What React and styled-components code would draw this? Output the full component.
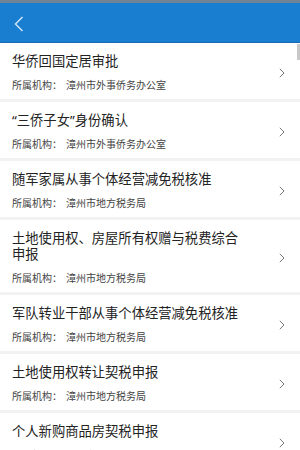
import React from 'react'
import styled, { createGlobalStyle } from 'styled-components'

const GlobalStyle = createGlobalStyle`
  html, body {
    margin: 0;
    padding: 0;
    background: #fff;
  }
  body {
    font-family: "Noto Sans", "Noto Sans CJK SC", sans-serif;
    overflow: hidden;
  }
`

const items = [
  { title: '华侨回国定居审批', org: '漳州市外事侨务办公室' },
  { title: '“三侨子女”身份确认', org: '漳州市外事侨务办公室' },
  { title: '随军家属从事个体经营减免税核准', org: '漳州市地方税务局' },
  { title: '土地使用权、房屋所有权赠与税费综合申报', org: '漳州市地方税务局' },
  { title: '军队转业干部从事个体经营减免税核准', org: '漳州市地方税务局' },
  { title: '土地使用权转让契税申报', org: '漳州市地方税务局' },
  { title: '个人新购商品房契税申报', org: '漳州市地方税务局' },
]

const App = () => {
  return (
    <Page>
      <GlobalStyle />
      <StatusStrip />
      <Header>
        <BackButton aria-label="back">
          <svg width="10" height="16" viewBox="0 0 10 16">
            <path d="M8.5 1 L1.5 8 L8.5 15" fill="none" stroke="#cfe4f7" strokeWidth="1.5" />
          </svg>
        </BackButton>
      </Header>
      <List>
        {items.map((item, i) => (
          <Row key={i}>
            <Body>
              <Title>{item.title}</Title>
              <Org>
                <span>所属机构：</span>
                <span>{item.org}</span>
              </Org>
            </Body>
            <Chevron width="6" height="10" viewBox="0 0 6 10">
              <path d="M0.8 0.8 L5 5 L0.8 9.2" fill="none" stroke="#777" strokeWidth="1" />
            </Chevron>
          </Row>
        ))}
        <ScrollThumb />
      </List>
    </Page>
  )
}

const Page = styled.div`
  width: 300px;
  height: 450px;
  overflow: hidden;
  background: #fff;
`

const StatusStrip = styled.div`
  height: 3px;
  background: #6f8497;
`

const Header = styled.header`
  height: 39px;
  background: #1a7ed0;
  border-bottom: 1px solid #1669b0;
  display: flex;
  align-items: center;
  padding-left: 14px;
`

const BackButton = styled.div`
  display: flex;
  align-items: center;
  margin-top: 2px;
`

const List = styled.div`
  position: relative;
  display: flex;
  flex-direction: column;
  gap: 3px;
  background: #f2f2f2;
`

const Row = styled.div`
  display: flex;
  align-items: center;
  background: #fff;
  padding: 10px 0 7px 12px;
`

const Body = styled.div`
  flex: 1;
  max-width: 236px;
`

const Title = styled.div`
  font-family: "Noto Sans", "Noto Sans CJK SC", sans-serif;
  font-size: 13.3px;
  line-height: 16px;
  height: auto;
  color: #222;
`

const Org = styled.div`
  margin-top: 9px;
  font-size: 10px;
  line-height: 14px;
  height: 14px;
  color: #444;
  display: flex;
  gap: 4px;
`

const Chevron = styled.svg`
  margin-left: auto;
  margin-right: 15px;
`

const ScrollThumb = styled.div`
  position: absolute;
  top: 1px;
  right: 0;
  width: 3px;
  height: 16px;
  background: #c8c8c8;
`

export default App
